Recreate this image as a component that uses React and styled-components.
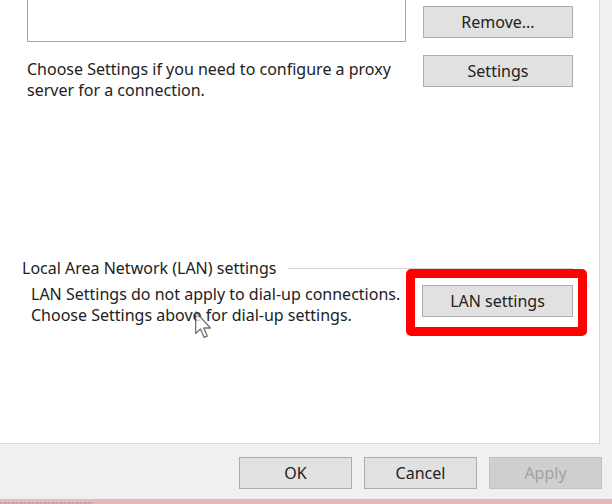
import React from "react";
import styled, { createGlobalStyle } from "styled-components";

const Global = createGlobalStyle`
  html, body { margin: 0; padding: 0; overflow: hidden; }
  body { background: #f0f0f0; }
`;

const Window = styled.div`
  width: 612px;
  height: 504px;
  display: flex;
  flex-direction: column;
  background: #f0f0f0;
  font-family: "Noto Sans", "Open Sans", sans-serif;
  font-size: 16px;
  line-height: 21px;
  color: #222;
  overflow: hidden;
`;

const Main = styled.div`
  display: flex;
  height: 444px;
  flex-shrink: 0;
`;

const Panel = styled.div`
  position: relative;
  width: 599px;
  height: 443px;
  background: #fff;
  border-right: 1px solid #d9d9d9;
  border-bottom: 1px solid #d9d9d9;
  padding: 0 26px 0 22px;
  box-sizing: content-box;
  box-sizing: border-box;
  width: 600px;
  height: 444px;
  display: flex;
  flex-direction: column;
`;

const TopRow = styled.div`
  display: grid;
  grid-template-columns: 379px 150px;
  column-gap: 17px;
  padding-left: 5px;
  margin-top: ${(p) => p.$mt || 0}px;
`;

const ListBox = styled.div`
  height: 42px;
  box-sizing: border-box;
  border: 1px solid #a6a6a6;
  border-top: none;
  background: #fff;
`;

const Button = styled.button`
  box-sizing: border-box;
  width: ${(p) => p.$w || 150}px;
  height: 32px;
  margin: 0;
  margin-top: ${(p) => p.$mt || 0}px;
  padding: 0;
  background: ${(p) => (p.disabled ? "#cfcfcf" : "#e1e1e1")};
  border: 1px solid ${(p) => (p.disabled ? "#c2c2c2" : "#adadad")};
  color: ${(p) => (p.disabled ? "#a2a2a2" : "#222")};
  font-family: inherit;
  font-size: 16px;
  line-height: 20px;
  align-self: start;
`;

const Text = styled.div`
  padding-top: ${(p) => p.$pt || 0}px;
`;

const Group = styled.div`
  margin-top: 157px;
  display: flex;
  flex-direction: column;
`;

const GroupHeader = styled.div`
  display: flex;
  align-items: center;
  gap: 11px;
  height: 21px;
`;

const Rule = styled.div`
  flex: 1;
  height: 1px;
  background: #d5d5d5;
`;

const GroupBody = styled.div`
  display: flex;
  justify-content: space-between;
  align-items: flex-start;
  margin-top: 5px;
  padding-left: 9px;
`;

const Highlight = styled.div`
  position: relative;
  margin-top: 1px;
`;

const RedBox = styled.div`
  position: absolute;
  left: -16px;
  top: -16px;
  right: -14px;
  bottom: -19px;
  border: 9px solid #ff0000;
  border-radius: 5px;
  pointer-events: none;
`;

const Cursor = styled.svg`
  position: absolute;
  left: 195px;
  top: 311px;
  opacity: 0.75;
`;

const Footer = styled.div`
  flex: 1;
  display: flex;
  justify-content: flex-end;
  align-items: flex-start;
  gap: 12px;
  padding: 13px 10px 0 0;
`;

const BottomBar = styled.div`
  height: 5px;
  flex-shrink: 0;
  background: #e9b6b9;
  display: flex;
  align-items: flex-end;
`;

const BarSegment = styled.div`
  width: 93px;
  height: 2px;
  background: repeating-linear-gradient(90deg, #c9a2a5 0 2px, #d9adb0 2px 4px);
`;

export default function App() {
  return (
    <>
      <Global />
      <Window>
        <Main>
          <Panel>
            <TopRow>
              <ListBox />
              <Button $mt={6}>Remove...</Button>
            </TopRow>
            <TopRow $mt={13}>
              <Text $pt={4}>
                Choose Settings if you need to configure a proxy
                <br />
                server for a connection.
              </Text>
              <Button>Settings</Button>
            </TopRow>
            <Group>
              <GroupHeader>
                <span>Local Area Network (LAN) settings</span>
                <Rule />
              </GroupHeader>
              <GroupBody>
                <Text>
                  LAN Settings do not apply to dial-up connections.
                  <br />
                  Choose Settings above for dial-up settings.
                </Text>
                <Highlight>
                  <Button $w={151}>LAN settings</Button>
                  <RedBox />
                </Highlight>
              </GroupBody>
            </Group>
            <Cursor width="17" height="28" viewBox="0 0 13 21">
              <path
                d="M0.5 0.5 L0.5 17 L4.2 13.6 L7 20 L9.4 19 L6.7 12.8 L11.8 12.8 Z"
                fill="#fff"
                stroke="#444"
                strokeWidth="1"
                strokeLinejoin="round"
              />
            </Cursor>
          </Panel>
        </Main>
        <Footer>
          <Button $w={113}>OK</Button>
          <Button $w={113}>Cancel</Button>
          <Button $w={113} disabled>
            Apply
          </Button>
        </Footer>
        <BottomBar>
          <BarSegment />
        </BottomBar>
      </Window>
    </>
  );
}
